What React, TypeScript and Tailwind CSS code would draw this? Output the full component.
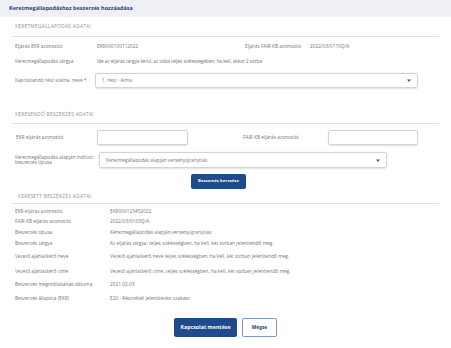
import React from "react";

const navy = "text-[#1d4280]";

const Caret = () => (
  <svg width="4" height="3" viewBox="0 0 4 3" className="shrink-0">
    <path d="M0 0.5h4L2 3z" fill="#2f5bb0" />
  </svg>
);

const SectionTitle = ({ title, className }: { title: string; className: string }) => (
  <div className={`flex items-center border-b border-[#dde1e8] text-[4.8px] uppercase tracking-[0.3px] text-[#8a92a1] ${className}`}>
    <span className="pl-[3px]">{title}</span>
  </div>
);

const found = [
  { label: "EKR eljárás azonosító", value: "EKR000123452022", h: "h-[10px]" },
  { label: "FAIR KB eljárás azonosító", value: "2022/03/0103Q/A", h: "h-[11px]" },
  { label: "Beszerzés típusa", value: "Keretmegállapodás alapján versenyújranyitás", h: "h-[11px]" },
  { label: "Beszerzés tárgya", value: "Az eljárás tárgya, teljes szélességben, ha kell, két sorban jelenítendő meg.", h: "h-[10px]" },
  { label: "Vezető ajánlatkérő neve", value: "Vezető ajánlatkérő neve teljes szélességben, ha kell, két sorban jelenítendő meg.", h: "h-[17px]" },
  { label: "Vezető ajánlatkérő címe", value: "Vezető ajánlatkérő címe, teljes szélességben, ha kell, két sorban jelenítendő meg.", h: "h-[12px]" },
  { label: "Beszerzés megindításának dátuma", value: "2021.02.03", h: "h-[15px]" },
  { label: "Beszerzés állapota  (EKR)", value: "E20 - Részvételi jelentkezési szakasz", h: "h-[12px]" },
];

export default function App() {
  return (
    <div className="h-[348px] w-[451px] overflow-hidden bg-white font-['Open_Sans',sans-serif] text-[4.7px] leading-none tracking-[0.05px] text-[#6e737e]">
      <div className="flex h-[17px] items-center bg-[#eef0f4] px-[9px]">
        <span className={`text-[5.4px] font-bold ${navy}`}>Keretmegállapodáshoz beszerzés hozzáadása</span>
      </div>

      <div className="px-[12px]">
        <SectionTitle title="Keretmegállapodás adatai" className="h-[20px]" />

        <div className="flex h-[19px] items-center pl-[3px]">
          <div className="flex w-[230px] items-center">
            <span className="w-[82px]">Eljárás EKR azonosító</span>
            <span>EKR000100112022</span>
          </div>
          <span className="w-[65px]">Eljárás FAIR KB azonosító</span>
          <span>2022/03/0110Q/A</span>
        </div>

        <div className="flex h-[11px] items-center pl-[3px]">
          <span className="w-[82px]">Keretmegállapodás tárgya</span>
          <span className="tracking-[-0.05px]">Ide az eljárás tárgya kerül, az oldal teljes szélességében, ha kell, akkor 2 sorba</span>
        </div>

        <div className="mt-[6px] flex items-center pl-[3px]">
          <span className="w-[80px]">
            Kapcsolandó rész száma, neve <span className="text-[#e0342f]">*</span>
          </span>
          <div className="flex h-[15px] w-[323px] items-center justify-between rounded-[2px] border border-[#cfd4dc] px-[6px] shadow-[0_0.5px_1.5px_rgba(0,0,0,0.12)]">
            <span>1. rész - Alma</span>
            <Caret />
          </div>
        </div>

        <SectionTitle title="Keresendő beszerzés adatai" className="mt-[18px] h-[18px]" />

        <div className="mt-[6px] flex items-center pl-[4px]">
          <span className="w-[81px]">EKR eljárás azonosító</span>
          <div className="h-[15px] w-[91px] rounded-[2px] border border-[#cfd4dc] shadow-[0_0.5px_1.5px_rgba(0,0,0,0.12)]" />
          <span className="ml-[55px] w-[85px]">FAIR KB eljárás azonosító</span>
          <div className="h-[15px] w-[90px] rounded-[2px] border border-[#cfd4dc] shadow-[0_0.5px_1.5px_rgba(0,0,0,0.12)]" />
        </div>

        <div className="mt-[7px] flex items-center pl-[3px]">
          <span className="w-[84px] leading-[5.5px]">
            Keretmegállapodás alapján indított
            <br />
            beszerzés típusa
          </span>
          <div className="flex h-[16px] w-[288px] items-center justify-between rounded-[2px] border border-[#cfd4dc] px-[6px] shadow-[0_0.5px_1.5px_rgba(0,0,0,0.12)]">
            <span>Keretmegállapodás alapján versenyújranyitás</span>
            <Caret />
          </div>
        </div>

        <div className="mt-[6px] flex pl-[179px]">
          <button className="flex h-[15px] w-[55px] items-center justify-center rounded-[2px] bg-[#1f4b8c] text-[4.2px] font-bold text-white">
            Beszerzés keresése
          </button>
        </div>

        <SectionTitle title="Keresett  beszerzés adatai" className="h-[15px] [&>span]:pl-[6px]" />

        <div className="mt-[2px]">
          {found.map((r) => (
            <div key={r.label} className={`flex items-center pl-[3px] ${r.h}`}>
              <span className="w-[95px]">{r.label}</span>
              <span>{r.value}</span>
            </div>
          ))}
        </div>
      </div>

      <div className="mt-[14px] flex justify-center gap-[5px]">
        <button className="flex h-[19px] w-[63px] items-center justify-center rounded-[2px] bg-[#1f4b8c] text-[5.2px] font-bold text-white">
          Kapcsolat mentése
        </button>
        <button className={`flex h-[19px] w-[35px] items-center justify-center rounded-[2px] border border-[#7f97c4] bg-white text-[4.8px] font-bold ${navy}`}>
          Mégse
        </button>
      </div>
    </div>
  );
}
